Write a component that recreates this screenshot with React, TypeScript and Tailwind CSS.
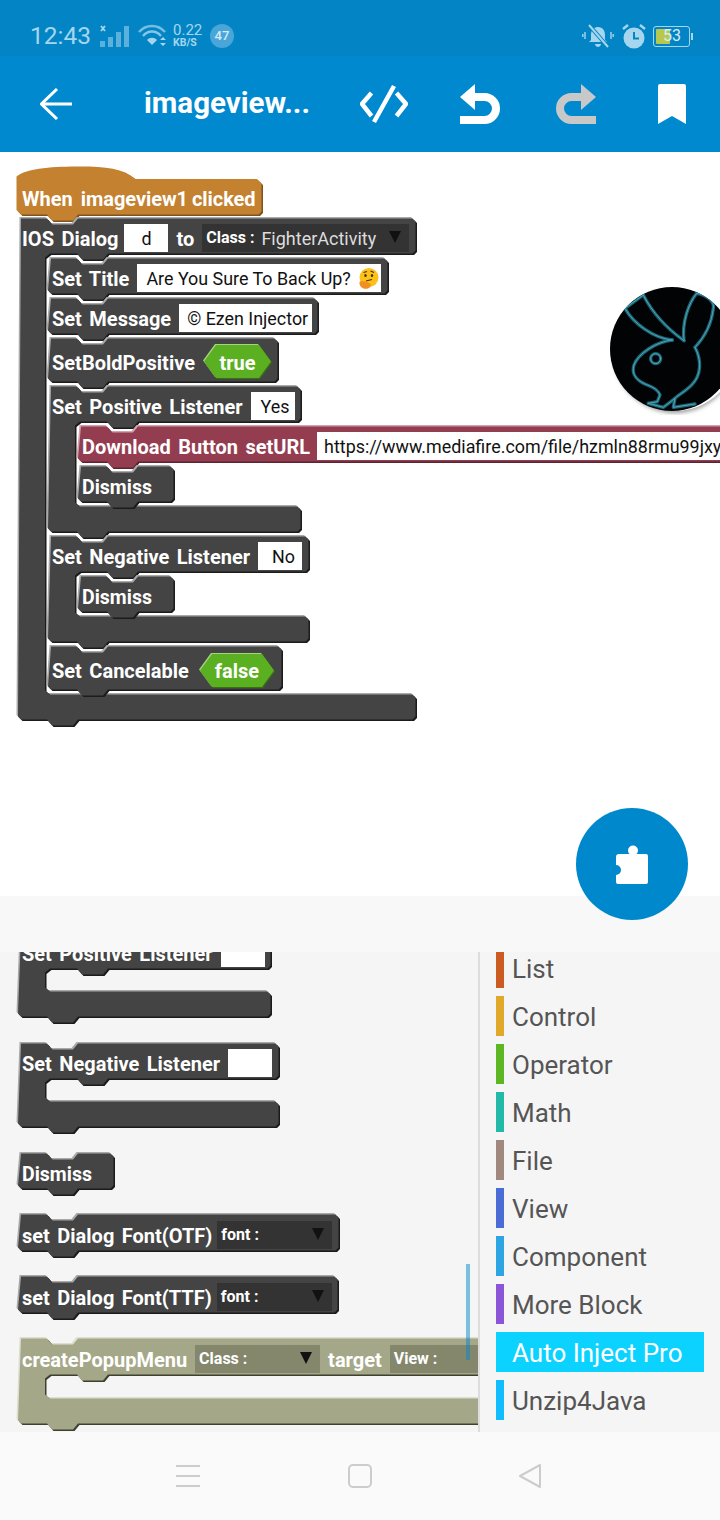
import React from "react";

type Theme = { fill: string; hi: string; lo: string };
const DARK: Theme = { fill: "#444444", hi: "#a9a9a9", lo: "#1b1b1b" };
const HAT: Theme = { fill: "#c48130", hi: "#c48130", lo: "#7d5420" };
const RED: Theme = { fill: "#943c50", hi: "#cfa3ad", lo: "#5a2531" };
const OLIVE: Theme = { fill: "#a5a888", hi: "#dedfd0", lo: "#3e4030" };
const GREEN: Theme = { fill: "#5bb022", hi: "#a4d383", lo: "#37700f" };

const I = 1.5;

function blockPath(w: number, h: number, h1?: number, h2?: number, hat?: boolean) {
  const L = 1, R = w - I, T = I, B = h - I;
  let d = "";
  if (hat) {
    d += `M${L} 10 C12 1 40 0 65 0 C90 0 108 2 120 ${T + 11} H${R - 3} L${R} ${T + 14} `;
  } else {
    d += `M${L + 3} ${T} H30 L35 ${T + 6} H56 L61 ${T} H${R - 3} L${R} ${T + 3} `;
  }
  if (h1 !== undefined && h2 !== undefined) {
    const a = h1 - I, b = h2 + I;
    d += `V${a - 3} L${R - 3} ${a} H91 L86 ${a + 6} H65 L60 ${a} H33 L28 ${a + 4} V${b - 4} L33 ${b} H${R - 3} L${R} ${b + 3} `;
  }
  d += `V${B - 3} L${R - 3} ${B} H61 L56 ${B + 6} H35 L30 ${B} H${L + 3} L${L} ${B - 3} Z`;
  return d;
}

function Shape({ d, theme, w, h }: { d: string; theme: Theme; w: number; h: number }) {
  return (
    <svg width={w} height={h} className="absolute left-0 top-0 overflow-visible">
      <path d={d} fill={theme.hi} transform={`translate(-${I} -${I})`} />
      <path d={d} fill={theme.lo} transform={`translate(${I} ${I})`} />
      <path d={d} fill={theme.fill} />
    </svg>
  );
}

function Block({
  w, h, box, h1, h2, hat, theme = DARK, children,
}: {
  w: number; h: number; box: string; h1?: number; h2?: number; hat?: boolean; theme?: Theme; children: React.ReactNode;
}) {
  return (
    <div className={`relative shrink-0 ${box}`}>
      <Shape d={blockPath(w, h, h1, h2, hat)} theme={theme} w={w} h={h} />
      {children}
    </div>
  );
}

function Row({ children }: { children: React.ReactNode }) {
  return <div className="relative flex items-center h-[38px] pt-[4px] pl-[5px] gap-[8px] whitespace-nowrap">{children}</div>;
}

function TallRow({ children }: { children: React.ReactNode }) {
  return <div className="relative flex items-center h-[40px] pt-[4px] pl-[5px] gap-[8px] whitespace-nowrap">{children}</div>;
}

function Label({ children }: { children: React.ReactNode }) {
  return <span className="mt-[2px] text-[20px] leading-[24px] font-bold text-white [word-spacing:2.5px]">{children}</span>;
}

function Field({ box, children }: { box: string; children?: React.ReactNode }) {
  return <div className={`flex items-center h-[28px] pt-[2px] bg-white text-[#111111] text-[17.9px] whitespace-nowrap shrink-0 ${box}`}>{children}</div>;
}

function Tri() {
  return (
    <svg width="12" height="12" viewBox="0 0 12 12" className="absolute right-[8px] top-[7px]">
      <path d="M0 0H12L6 12Z" fill="#111111" />
    </svg>
  );
}

function Drop({ box, label, value, dark = "bg-[#333333]" }: { box: string; label: string; value?: string; dark?: string }) {
  return (
    <div className={`relative flex items-center h-[28px] pl-[4px] shrink-0 ${dark} ${box}`}>
      <span className="text-[16px] font-bold text-white">{label}</span>
      {value && <span className="ml-[7px] text-[18px] text-[#dddddd]">{value}</span>}
      <Tri />
    </div>
  );
}

function Hex({ w, box, children }: { w: number; box: string; children: React.ReactNode }) {
  const h = 35;
  const d = `M1 ${h / 2} L13 1 H${w - 13} L${w - 1} ${h / 2} L${w - 13} ${h - 1} H13 Z`;
  return (
    <div className={`relative flex items-center justify-center h-[35px] shrink-0 ${box}`}>
      <svg width={w} height={h} className="absolute left-0 top-0 overflow-visible">
        <path d={d} fill={GREEN.hi} transform="translate(-1 -1)" />
        <path d={d} fill={GREEN.lo} transform="translate(1 1)" />
        <path d={d} fill={GREEN.fill} />
      </svg>
      <span className="relative mt-[2px] text-[20px] font-bold text-white">{children}</span>
    </div>
  );
}

function Dismiss() {
  return (
    <Block w={98} h={38} box="w-[98px] h-[38px]">
      <Row><span className="mt-[4px] text-[19.5px] leading-[24px] font-bold text-white">Dismiss</span></Row>
    </Block>
  );
}

function Body({ children }: { children: React.ReactNode }) {
  return <div className="relative ml-[30px] mt-[2px] flex flex-col gap-[2px]">{children}</div>;
}

function ThinkingFace() {
  return (
    <svg width="24" height="24" viewBox="0 0 24 24" className="ml-[6px] shrink-0">
      <circle cx="12" cy="10.5" r="9.5" fill="#fcc21b" />
      <ellipse cx="8.5" cy="8.5" rx="1.2" ry="1.5" fill="#4a3000" />
      <ellipse cx="15" cy="8.5" rx="1.2" ry="1.5" fill="#4a3000" />
      <path d="M6.5 5.5 L10 4.5 M13.5 4 L17 5.5" stroke="#4a3000" strokeWidth="1.1" fill="none" />
      <path d="M9 14 L15 12.5" stroke="#4a3000" strokeWidth="1.2" fill="none" />
      <path d="M2.5 15 C5 13 9 14.5 11 15.5 C13 16 14.5 17.5 13.5 19.5 C12 22 8 22.5 5.5 21 C3.5 20 2 17.5 2.5 15Z" fill="#f19020" />
    </svg>
  );
}

function Bunny() {
  const lines = [
    "M250 75 C275 125 320 175 372 212",
    "M250 75 L195 115 C220 160 280 205 337 210",
    "M372 212 C365 160 385 100 410 70",
    "M410 70 C440 75 465 95 460 115 C455 160 435 200 405 232",
    "M337 210 C290 215 235 250 222 285 C212 315 235 335 262 345 C280 352 295 360 300 375 L292 395 L265 400",
    "M405 232 C425 270 425 315 395 345 C375 365 355 375 345 385",
    "M265 400 L310 412 L345 385 L340 412 L405 402",
  ];
  return (
    <svg width="110" height="130" viewBox="0 0 110 130" className="absolute left-[610px] top-[133px]">
      <defs>
        <filter id="glow" x="-20%" y="-20%" width="140%" height="140%"><feGaussianBlur stdDeviation="1.8" /></filter>
        <filter id="core" x="-20%" y="-20%" width="140%" height="140%"><feGaussianBlur stdDeviation="0.45" /></filter>
        <filter id="soft" x="-20%" y="-20%" width="140%" height="140%"><feGaussianBlur stdDeviation="2" /></filter>
        <clipPath id="disc"><circle cx="62" cy="64" r="62" /></clipPath>
      </defs>
      <circle cx="65" cy="66" r="62" fill="#999999" filter="url(#soft)" />
      <circle cx="65" cy="63" r="63" fill="#ffffff" />
      <circle cx="62" cy="64" r="62" fill="#020304" />
      <g clipPath="url(#disc)">
        <g transform="translate(-50 -15) scale(0.3333)" fill="none" strokeLinecap="round" strokeLinejoin="round">
          <g stroke="#1a6576" strokeWidth="10" filter="url(#glow)">
            {lines.map((d) => <path key={d} d={d} />)}
            <circle cx="287" cy="266" r="15" />
          </g>
          <g stroke="#4fa6b6" strokeWidth="3" filter="url(#core)">
            {lines.map((d) => <path key={d} d={d} />)}
            <circle cx="287" cy="266" r="15" />
          </g>
        </g>
      </g>
    </svg>
  );
}

function StatusBar() {
  const c = "#a6d6ee";
  return (
    <div className="flex items-center h-[56px] pt-[16px] pl-[30px] pr-[30px] bg-[#0385c5] text-[#a6d6ee]">
      <span className="text-[24.5px] leading-none w-[61px]">12:43</span>
      <svg width="30" height="24" viewBox="0 0 30 24" className="ml-[9px]">
        <path d="M1 2 L5 7 M5 2 L1 7" stroke={c} strokeWidth="1.8" />
        <rect x="0" y="17" width="5" height="6" fill={c} opacity=".55" />
        <rect x="8" y="13" width="5" height="10" fill={c} opacity=".55" />
        <rect x="16" y="8" width="5" height="15" fill={c} opacity=".55" />
        <rect x="24" y="2" width="5" height="21" fill={c} opacity=".55" />
      </svg>
      <svg width="28" height="24" viewBox="0 0 28 24" className="ml-[8px]">
        <path d="M1 8 C8 0 20 0 27 8" stroke={c} strokeWidth="2.4" fill="none" opacity=".7" />
        <path d="M5 12 C10 6 18 6 23 12" stroke={c} strokeWidth="2.4" fill="none" opacity=".8" />
        <path d="M9 16 C12 13 16 13 19 16 L14 21Z" fill={c} />
        <path d="M22 16 L25 13 L28 16Z M22 19 L28 19 L25 22Z" fill={c} />
      </svg>
      <div className="ml-[7px] flex flex-col items-start w-[29px]">
        <span className="text-[15px] leading-[13px]">0.22</span>
        <span className="text-[10.5px] leading-[11px] font-bold">KB/S</span>
      </div>
      <div className="ml-[8px] flex items-center justify-center w-[24px] h-[24px] rounded-full bg-[#4aa5d8] text-[13px] font-medium text-[#d5ecf8]">47</div>
      <div className="flex-1" />
      <svg width="32" height="24" viewBox="0 0 32 24">
        <path d="M16 3 C11 3 9 7 9 11 V16 L7 18 H25 L23 16 V11 C23 7 21 3 16 3Z M13 20 H19 C19 22 17 23 16 23 C15 23 13 22 13 20Z" fill={c} />
        <path d="M7 1 L26 23" stroke="#0385c5" strokeWidth="4" />
        <path d="M7 1 L26 23" stroke={c} strokeWidth="2" />
        <path d="M3 8 V15 M0.8 10 V13 M29 8 V15 M31.2 10 V13" stroke={c} strokeWidth="1.4" />
      </svg>
      <svg width="24" height="25" viewBox="0 0 24 25" className="ml-[8px]">
        <circle cx="12" cy="14" r="10.5" fill={c} />
        <path d="M12 8 V14.5 H17" stroke="#0385c5" strokeWidth="2" fill="none" />
        <path d="M1 5 L6 1 M23 5 L18 1" stroke={c} strokeWidth="2.4" />
      </svg>
      <div className="relative ml-[7px] flex items-center w-[37px] h-[21px] rounded-[3px] border border-[#a6d6ee]">
        <div className="absolute left-[2px] top-[2px] bottom-[2px] w-[14px] bg-[#b6c94e] rounded-[1px]" />
        <span className="relative pl-[9px] text-[16px] leading-none text-[#d8ecf5]">53</span>
        <div className="absolute right-[-4px] top-[6px] w-[2px] h-[7px] bg-[#a6d6ee]" />
      </div>
    </div>
  );
}

function Toolbar() {
  return (
    <div className="flex items-center h-[96px] pl-[40px] bg-[#0189d0] text-white">
      <svg width="32" height="32" viewBox="0 0 32 32" className="shrink-0">
        <path d="M32 16 H2 M17 1 L1.5 16 L17 31" stroke="#ffffff" strokeWidth="3" fill="none" />
      </svg>
      <span className="ml-[72px] w-[166px] text-[29.5px] leading-none font-bold whitespace-nowrap shrink-0">imageview...</span>
      <svg width="48" height="40" viewBox="0 0 48 40" className="ml-[50px] shrink-0">
        <path d="M11.5 9 L2 20 L11.5 32 M36.5 9 L46 20 L36.5 32 M34 2 L14 38" stroke="#ffffff" strokeWidth="4.5" fill="none" />
      </svg>
      <svg width="40" height="40" viewBox="0 0 40 40" className="ml-[52px] shrink-0">
        <path d="M12 13 H24.5 A11.5 11.5 0 0 1 24.5 36 H0" stroke="#ffffff" strokeWidth="8" fill="none" />
        <path d="M0 13 L15 0 V26Z" fill="#ffffff" />
      </svg>
      <svg width="40" height="40" viewBox="0 0 40 40" className="ml-[56px] shrink-0">
        <path d="M28 13 H15.5 A11.5 11.5 0 0 0 15.5 36 H40" stroke="#c8c8c8" strokeWidth="8" fill="none" />
        <path d="M40 13 L25 0 V26Z" fill="#c8c8c8" />
      </svg>
      <svg width="28" height="40" viewBox="0 0 28 40" className="ml-[62px] shrink-0">
        <path d="M2 0 H26 A2 2 0 0 1 28 2 V40 L14 32 L0 40 V2 A2 2 0 0 1 2 0Z" fill="#ffffff" />
      </svg>
    </div>
  );
}

function Canvas() {
  return (
    <div className="relative h-[744px] bg-white overflow-hidden">
      <div className="flex flex-col pl-[17px] pt-[16px] gap-[1px]">
        <Block w={246} h={48} box="w-[246px] h-[48px]" hat theme={HAT}>
          <div className="relative flex items-center h-[36px] mt-[12px] pl-[5px] gap-[8px] whitespace-nowrap">
            <Label>When</Label>
            <span className="mt-[2px] text-[20px] leading-[24px] font-bold text-white [word-spacing:-1px] tracking-[-0.05px]">imageview1 clicked</span>
          </div>
        </Block>
        <Block w={400} h={504} h1={38} h2={476} box="w-[400px] h-[504px]">
          <Row>
            <Label>IOS Dialog</Label>
            <Field box="ml-[-2px] w-[44px] justify-center">d</Field>
            <Label>to</Label>
            <Drop box="w-[207px]" label="Class :" value="FighterActivity" />
          </Row>
          <Body>
            <Block w={342} h={38} box="w-[342px] h-[38px]">
              <Row>
                <Label>Set Title</Label>
                <Field box="w-[244px] pl-[9px]">Are You Sure To Back Up?<ThinkingFace /></Field>
              </Row>
            </Block>
            <Block w={272} h={38} box="w-[272px] h-[38px]">
              <Row>
                <Label>Set Message</Label>
                <Field box="w-[133px] pl-[8px]">© Ezen Injector</Field>
              </Row>
            </Block>
            <Block w={232} h={46} box="w-[232px] h-[46px]">
              <div className="relative flex items-center h-[46px] pt-[3px] pl-[5px] gap-[8px] whitespace-nowrap">
                <Label>SetBoldPositive</Label>
                <Hex w={69} box="w-[69px]">true</Hex>
              </div>
            </Block>
            <Block w={255} h={148} h1={38} h2={120} box="w-[255px] h-[148px]">
              <Row>
                <Label>Set Positive Listener</Label>
                <Field box="w-[44px] pl-[10px]">Yes</Field>
              </Row>
              <Body>
                <Block w={680} h={38} box="w-[680px] h-[38px]" theme={RED}>
                  <Row>
                    <Label>Download Button setURL</Label>
                    <Field box="ml-[-1px] w-[500px] pl-[7px]">https://www.mediafire.com/file/hzmln88rmu99jxy</Field>
                  </Row>
                </Block>
                <Dismiss />
              </Body>
            </Block>
            <Block w={263} h={108} h1={38} h2={80} box="w-[263px] h-[108px]">
              <Row>
                <Label>Set Negative Listener</Label>
                <Field box="w-[44px] pl-[14px]">No</Field>
              </Row>
              <Body>
                <Dismiss />
              </Body>
            </Block>
            <Block w={236} h={46} box="w-[236px] h-[46px]">
              <div className="relative flex items-center h-[46px] pt-[4px] pl-[5px] gap-[10px] whitespace-nowrap">
                <Label>Set Cancelable</Label>
                <Hex w={76} box="w-[76px]">false</Hex>
              </div>
            </Block>
          </Body>
        </Block>
      </div>
      <Bunny />
    </div>
  );
}

const CATS: { name: string; bar: string }[] = [
  { name: "List", bar: "bg-[#cc5b22]" },
  { name: "Control", bar: "bg-[#e1a92a]" },
  { name: "Operator", bar: "bg-[#5cb722]" },
  { name: "Math", bar: "bg-[#23b9a9]" },
  { name: "File", bar: "bg-[#a1887f]" },
  { name: "View", bar: "bg-[#4a6cd4]" },
  { name: "Component", bar: "bg-[#2ca5e2]" },
  { name: "More Block", bar: "bg-[#8a55d7]" },
];

function CatRow({ name, bar }: { name: string; bar: string }) {
  return (
    <div className="flex items-center h-[40px] w-[208px] shrink-0">
      <div className={`w-[8px] h-full ${bar}`} />
      <span className="ml-[8px] mt-[2px] text-[26px] leading-none text-[#555555]">{name}</span>
    </div>
  );
}

function Palette() {
  return (
    <div className="flex flex-col h-[536px] bg-[#f8f8f8]">
      <div className="h-[56px] shrink-0" />
      <div className="flex flex-1 min-h-0 bg-[#f5f5f5] overflow-hidden">
        <div className="relative w-[478px] overflow-hidden shrink-0">
          <div className="flex flex-col pl-[17px] mt-[-20px]">
            <Block w={255} h={86} h1={38} h2={58} box="w-[255px] h-[86px]">
              <Row><Label>Set Positive Listener</Label><Field box="w-[44px]" /></Row>
            </Block>
            <div className="mt-[24px]">
              <Block w={263} h={86} h1={38} h2={58} box="w-[263px] h-[86px]">
                <Row><Label>Set Negative Listener</Label><Field box="w-[44px]" /></Row>
              </Block>
            </div>
            <div className="mt-[24px]"><Dismiss /></div>
            <div className="mt-[23px]">
              <Block w={323} h={39} box="w-[323px] h-[39px]">
                <TallRow>
                  <Label>set Dialog Font(OTF)</Label>
                  <Drop box="ml-[-3px] w-[115px]" label="font :" />
                </TallRow>
              </Block>
            </div>
            <div className="mt-[23px]">
              <Block w={322} h={39} box="w-[322px] h-[39px]">
                <TallRow>
                  <Label>set Dialog Font(TTF)</Label>
                  <Drop box="ml-[-3px] w-[115px]" label="font :" />
                </TallRow>
              </Block>
            </div>
            <div className="mt-[23px]">
              <Block w={700} h={88} h1={39} h2={60} box="w-[700px] h-[88px]" theme={OLIVE}>
                <TallRow>
                  <Label>createPopupMenu</Label>
                  <Drop box="w-[125px]" dark="bg-[#85876d]" label="Class :" />
                  <Label>target</Label>
                  <Drop box="w-[125px]" dark="bg-[#85876d]" label="View :" />
                </TallRow>
              </Block>
            </div>
          </div>
          <div className="absolute left-[466px] top-[312px] w-[4px] h-[96px] bg-[#0088cc]/50" />
        </div>
        <div className="w-[2px] bg-[#dddddd] shrink-0" />
        <div className="flex flex-col gap-[8px] pl-[16px] mt-[-4px]">
          {CATS.map((c) => <CatRow key={c.name} {...c} />)}
          <div className="flex items-center h-[40px] w-[208px] shrink-0 bg-[#0cd2ff] pl-[16px]"><span className="mt-[2px] text-[26px] leading-none text-white">Auto Inject Pro</span></div>
          <CatRow name="Unzip4Java" bar="bg-[#11bdff]" />
        </div>
      </div>
    </div>
  );
}

function NavBar() {
  return (
    <div className="flex items-center h-[88px] bg-[#fafafa] pl-[176px]">
      <div className="flex flex-col justify-between w-[24px] h-[22px]">
        <div className="h-[2px] bg-[#cccccc]" />
        <div className="h-[2px] bg-[#cccccc]" />
        <div className="h-[2px] bg-[#cccccc]" />
      </div>
      <div className="ml-[148px] w-[24px] h-[24px] rounded-[5px] border-2 border-[#cccccc]" />
      <svg width="24" height="26" viewBox="0 0 24 26" className="ml-[146px]">
        <path d="M22 2 L2 13 L22 24Z" stroke="#cccccc" strokeWidth="2" fill="none" strokeLinejoin="round" />
      </svg>
    </div>
  );
}

export default function App() {
  return (
    <div className="relative flex flex-col w-[720px] h-[1520px] overflow-hidden bg-white [font-family:Roboto,sans-serif]">
      <StatusBar />
      <Toolbar />
      <Canvas />
      <Palette />
      <NavBar />
      <div className="absolute left-[576px] top-[808px] flex items-center justify-center w-[112px] h-[112px] rounded-full bg-[#0088cc]">
        <svg width="32" height="40" viewBox="0 0 32 40">
          <path d="M3 10 H13.5 A5 5 0 1 1 20.5 10 H30 A2 2 0 0 1 32 12 V38 A2 2 0 0 1 30 40 H2 A2 2 0 0 1 0 38 V31 A5 5 0 0 0 0 21 V13 A3 3 0 0 1 3 10Z" fill="#ffffff" />
        </svg>
      </div>
    </div>
  );
}
